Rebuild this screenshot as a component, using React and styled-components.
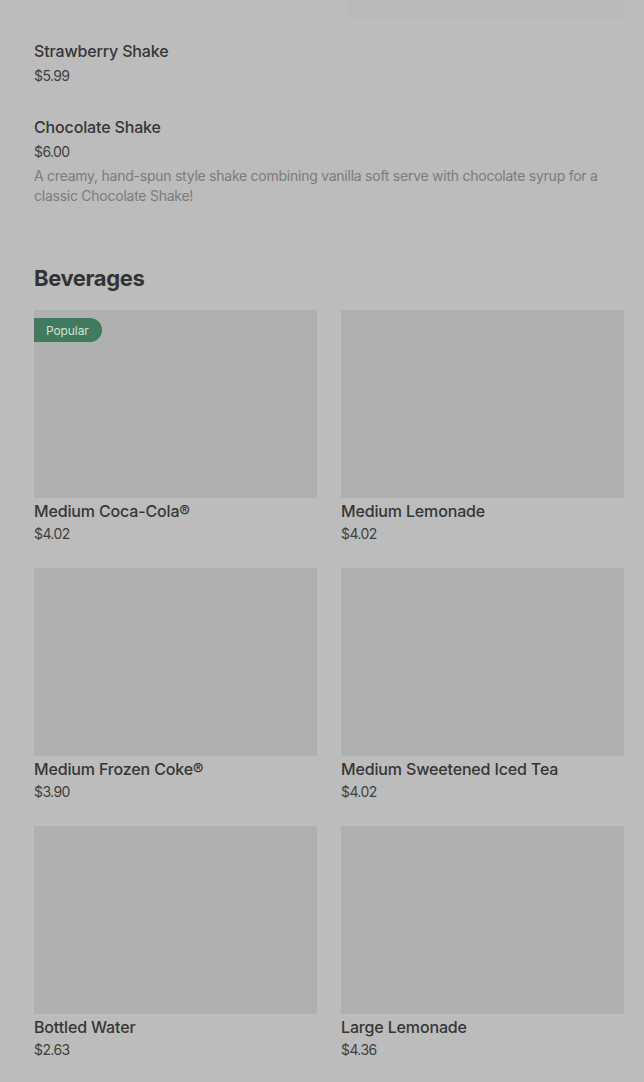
import React from "react";
import styled, { createGlobalStyle } from "styled-components";

const Global = createGlobalStyle`
  html, body { margin: 0; padding: 0; background: #bcbcbc; }
  body { font-family: Inter, "Noto Sans", sans-serif; color: #333; -webkit-font-smoothing: antialiased; }
`;

const Page = styled.div`
  padding: 0 20px 40px 34px;
  display: flex;
  flex-direction: column;
`;

const TopThumb = styled.div`
  align-self: flex-end;
  width: 276px;
  height: 18px;
  background: #b9b9b9;
  border-radius: 0 0 4px 4px;
`;

const List = styled.div`
  display: flex;
  flex-direction: column;
  gap: 31px;
  margin-top: 23px;
`;

const Item = styled.div`
  display: flex;
  flex-direction: column;
`;

const Name = styled.div`
  font-size: 16px;
  line-height: 20px;
  font-weight: 500;
  letter-spacing: -0.15px;
  color: #363636;
`;

const Price = styled.div`
  font-size: 14px;
  line-height: 20px;
  color: #3f3f3f;
  letter-spacing: -0.6px;
  margin-top: ${(p) => p.$gap}px;
`;

const Desc = styled.div`
  font-size: 14px;
  line-height: 20px;
  color: #7b7b7b;
  letter-spacing: -0.25px;
  margin-top: 4px;
`;

const Heading = styled.h2`
  margin: 56px 0 16px;
  font-size: 22px;
  line-height: 32px;
  font-weight: 700;
  color: #333;
  letter-spacing: -0.4px;
`;

const Grid = styled.div`
  display: grid;
  grid-template-columns: 1fr 1fr;
  column-gap: 24px;
  row-gap: 24px;
`;

const Card = styled.div`
  display: flex;
  flex-direction: column;
`;

const Thumb = styled.div`
  position: relative;
  height: 188px;
  background: #b0b0b0;
  margin-bottom: 3px;
`;

const Badge = styled.span`
  position: absolute;
  top: 8px;
  left: 0;
  height: 24px;
  padding: 0 13px 0 12px;
  display: flex;
  align-items: center;
  background: #3f7b5c;
  color: #d3e2d8;
  font-size: 12px;
  letter-spacing: -0.1px;
  border-radius: 0 12px 12px 0;
`;

const shakes = [
  { name: "Strawberry Shake", price: "$5.99" },
  {
    name: "Chocolate Shake",
    price: "$6.00",
    desc: "A creamy, hand-spun style shake combining vanilla soft serve with chocolate syrup for a classic Chocolate Shake!",
  },
];

const drinks = [
  { name: "Medium Coca-Cola®", price: "$4.02", popular: true },
  { name: "Medium Lemonade", price: "$4.02" },
  { name: "Medium Frozen Coke®", price: "$3.90" },
  { name: "Medium Sweetened Iced Tea", price: "$4.02" },
  { name: "Bottled Water", price: "$2.63" },
  { name: "Large Lemonade", price: "$4.36" },
];

export default function App() {
  return (
    <>
      <Global />
      <Page>
        <TopThumb />
        <List>
          {shakes.map((s) => (
            <Item key={s.name}>
              <Name>{s.name}</Name>
              <Price $gap={5}>{s.price}</Price>
              {s.desc && <Desc>{s.desc}</Desc>}
            </Item>
          ))}
        </List>
        <Heading>Beverages</Heading>
        <Grid>
          {drinks.map((d) => (
            <Card key={d.name}>
              <Thumb>{d.popular && <Badge>Popular</Badge>}</Thumb>
              <Name>{d.name}</Name>
              <Price $gap={3}>{d.price}</Price>
            </Card>
          ))}
        </Grid>
      </Page>
    </>
  );
}
